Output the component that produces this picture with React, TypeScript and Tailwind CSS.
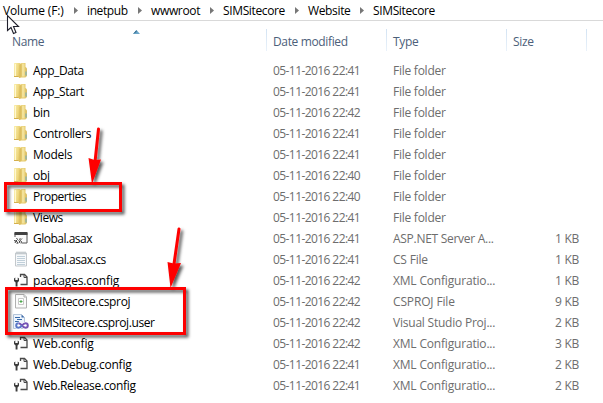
import type { ReactNode } from "react";

type Kind = "folder" | "asax" | "cs" | "config" | "csproj" | "user";
type Row = { name: string; kind: Kind; date: string; type: string; size?: string; nt: string; tt: string };

const FOLDER = { kind: "folder" as Kind, type: "File folder", tt: "tracking-[-0.25px]" };
const XML = { kind: "config" as Kind, type: "XML Configuratio...", tt: "tracking-[-0.18px]" };

const rows: Row[] = [
  { ...FOLDER, name: "App_Data", date: "22:41", nt: "tracking-[-0.4px]" },
  { ...FOLDER, name: "App_Start", date: "22:41", nt: "tracking-[-0.36px]" },
  { ...FOLDER, name: "bin", date: "22:42", nt: "tracking-[-0.3px]" },
  { ...FOLDER, name: "Controllers", date: "22:41", nt: "tracking-[-0.36px]" },
  { ...FOLDER, name: "Models", date: "22:41", nt: "tracking-[-0.28px]" },
  { ...FOLDER, name: "obj", date: "22:40", nt: "tracking-[-0.25px]" },
  { ...FOLDER, name: "Properties", date: "22:40", nt: "tracking-[-0.52px]" },
  { ...FOLDER, name: "Views", date: "22:41", nt: "tracking-[-0.4px]" },
  { name: "Global.asax", kind: "asax", date: "22:41", type: "ASP.NET Server A...", size: "1 KB", nt: "tracking-[-0.5px]", tt: "tracking-[-0.28px]" },
  { name: "Global.asax.cs", kind: "cs", date: "22:41", type: "CS File", size: "1 KB", nt: "tracking-[-0.45px]", tt: "tracking-[-0.2px]" },
  { ...XML, name: "packages.config", date: "22:42", size: "1 KB", nt: "tracking-[-0.18px]" },
  { name: "SIMSitecore.csproj", kind: "csproj", date: "22:42", type: "CSPROJ File", size: "9 KB", nt: "tracking-[-0.32px]", tt: "tracking-[-0.15px]" },
  { name: "SIMSitecore.csproj.user", kind: "user", date: "22:42", type: "Visual Studio Proj...", size: "2 KB", nt: "tracking-[-0.41px]", tt: "tracking-[-0.22px]" },
  { ...XML, name: "Web.config", date: "22:42", size: "3 KB", nt: "tracking-[-0.16px]" },
  { ...XML, name: "Web.Debug.config", date: "22:41", size: "2 KB", nt: "tracking-[-0.22px]" },
  { ...XML, name: "Web.Release.config", date: "22:41", size: "2 KB", nt: "tracking-[-0.32px]" },
];

const crumbs = [
  { label: "Volume (F:)", box: "w-[84px] tracking-[-0.14px]" },
  { label: "inetpub", box: "w-[64px] tracking-[-0.4px]" },
  { label: "wwwroot", box: "w-[72px] tracking-[-0.35px]" },
  { label: "SIMSitecore", box: "w-[85px] tracking-[-0.36px]" },
  { label: "Website", box: "w-[65px] tracking-[-0.35px]" },
  { label: "SIMSitecore", box: "w-[64px] tracking-[-0.36px]" },
];

function Icon({ children }: { children: ReactNode }) {
  return (
    <svg viewBox="0 0 16 16" className="mb-px h-4 w-4 shrink-0">
      {children}
    </svg>
  );
}

function FileIcon({ kind }: { kind: Kind }) {
  switch (kind) {
    case "folder":
      return (
        <Icon>
          <defs>
            <linearGradient id="fold" x1="0" y1="0" x2="1" y2="0.3">
              <stop offset="0" stopColor="#fbf1b4" />
              <stop offset="0.6" stopColor="#efd880" />
              <stop offset="1" stopColor="#dcbc55" />
            </linearGradient>
          </defs>
          <path d="M8 1h4.500v4l1 1v8l-1 1.500H7z" fill="#e5ca6c" />
          <path d="M8 1.500h3.500v13H8z" fill="#f3e29a" />
          <path d="M12.500 5l1.500 1.500v7.500l-1.500 1z" fill="#dcc06a" />
          <path d="M12.500 9.500h1v4h-1z" fill="#68a9c4" />
          <path d="M1 1h5.500L8.500 2v12.500l-2 1.500-1-1H1z" fill="url(#fold)" />
          <path d="M6.500 3l2-1v12.500l-2 1.500z" fill="#dcbe61" />
          <path d="M2.500 2v12" stroke="#fff8d0" strokeWidth="1" />
          <path d="M1 14.500h4.500" stroke="#d4b04d" />
        </Icon>
      );
    case "asax":
      return (
        <Icon>
          <path d="M2 7V3h12v10H9" fill="#fafafa" stroke="#555" />
          <path d="M1.500 2h13v3h-13z" fill="#414141" />
          <path d="M3.500 8l1 1.500L3 11l1.500 1L4 14M1 10.500l2 .5-1 2M6 9.500l1.500-1M9 8.500l-2 2 1.500 1-.5 2M5.500 10.500L7 12l-1.500 1" stroke="#444" strokeWidth="1" fill="none" />
        </Icon>
      );
    case "cs":
      return (
        <Icon>
          <path d="M2.500 2h11v13h-11z" fill="#f7f9fb" stroke="#c3c8cc" />
          <path d="M4 .5v3M6 .5v3M8 .5v3M10 .5v3M12 .5v3" stroke="#a0a8ae" strokeWidth=".8" />
          <path d="M4 5.500h8M4 7.500h8M4 9.500h8M4 11.500h8M4 13.500h8" stroke="#b9c9d5" strokeWidth=".9" />
        </Icon>
      );
    case "config":
      return (
        <Icon>
          <path d="M7.500 5V2.500h4L14 5v7.500H7.500" fill="#fafafa" stroke="#484848" strokeWidth="1.300" />
          <path d="M11 2.500v3h3" fill="none" stroke="#484848" />
          <path d="M1 6.500L2.300 5.500v2.500h2.400V5.500L6 6.500v2.500L4.500 10.500V14.500H2.600v-4L1 9z" fill="#3c3c3c" />
        </Icon>
      );
    case "csproj":
      return (
        <Icon>
          <path d="M2.500 1.500h8.500l2.500 2.500v11h-11z" fill="#fbfbfb" stroke="#b0b0b0" />
          <path d="M11 1.500v2.500h2.500" fill="#eee" stroke="#b0b0b0" />
          <path d="M5.500 5.500h5v6h-5z" fill="#fff" stroke="#c8c8c8" />
          <path d="M8 7v3M6.500 8.500h3" stroke="#4ca64c" />
        </Icon>
      );
    case "user":
      return (
        <Icon>
          <path d="M.5.5h8l3 3v11H.5z" fill="#edf4fd" stroke="#b4c5da" />
          <path d="M8.500.5v3h3z" fill="#406daa" />
          <path d="M2 3.500h5M4 5.500h5M2 7.500h4" stroke="#386aa9" />
          <path d="M9 11.500C7.700 9.900 6.700 9.200 5.500 9.200a2.300 2.300 0 000 4.600c1.200 0 2.200-.7 3.500-2.300s2.300-2.300 3.500-2.300a2.300 2.300 0 010 4.600c-1.200 0-2.200-.7-3.500-2.300z" fill="#fff" stroke="#fff" strokeWidth="3" />
          <path d="M9 11.500c1.300-1.600 2.300-2.300 3.500-2.300a2.300 2.300 0 010 4.600c-1.200 0-2.200-.7-3.500-2.300C7.700 9.900 6.700 9.200 5.500 9.200" fill="none" stroke="#7554b5" strokeWidth="2" />
          <path d="M5.500 9.200a2.300 2.300 0 000 4.600c1.200 0 2.200-.7 3.500-2.300" fill="none" stroke="#5a78c8" strokeWidth="2" />
        </Icon>
      );
  }
}

function Divider() {
  return <div className="h-[22px] w-px shrink-0 bg-gradient-to-b from-[#d3e3f3] to-[#eaf2fa]" />;
}

function Annotations() {
  return (
    <svg viewBox="0 0 603 403" className="pointer-events-none absolute left-0 top-0 h-[403px] w-[603px]">
      <defs>
        <filter id="shade" x="-20%" y="-20%" width="150%" height="150%">
          <feDropShadow dx="2.500" dy="2.500" stdDeviation="1.800" floodColor="#000" floodOpacity=".65" />
        </filter>
      </defs>
      <g filter="url(#shade)" fill="none" stroke="#fe0000" strokeWidth="3">
        <path d="M5.500 183.500h115v27h-115z" />
        <path d="M6.500 288.500h178v45h-178z" />
        <path d="M98.500 129L95 162M179 229l-5 35" strokeLinecap="round" />
        <path d="M88.500 158l6 2 6.500-.5L92 184z M167.500 262l6 1.500 7.500-.5-10.500 25z" fill="#fe0000" stroke="none" />
      </g>
      <path d="M7.500 15.500v15l3.500-3 2.500 6 2.500-1-2.500-6h5z" fill="#fff" stroke="#20202c" strokeWidth="1.100" />
    </svg>
  );
}

export default function App() {
  return (
    <div className="relative h-[403px] w-[603px] overflow-hidden whitespace-nowrap bg-white font-['Open_Sans','Noto_Sans',sans-serif] text-xs leading-[21px] text-black">
      <div className="flex h-[21px] items-center border-b border-[#d9d9d9] pl-[3px]">
        {crumbs.map((c, i) => (
          <div key={i} className={`flex h-[21px] shrink-0 items-center justify-between ${c.box}`}>
            <span>{c.label}</span>
            {i < crumbs.length - 1 && (
              <svg viewBox="0 0 4 7" className="mr-[9px] h-[7px] w-1">
                <path d="M0 0l4 3.500L0 7z" fill="#777" />
              </svg>
            )}
          </div>
        ))}
      </div>
      <div className="flex h-[39px] items-start pl-3 pt-2 tracking-[-0.36px] text-[#4c607a]">
        <span className="w-[121px] pt-0.5">Name</span>
        <svg viewBox="0 0 7 4" className="mt-[1px] h-1 w-[7px]">
          <path d="M0 4l3.500-4L7 4z" fill="#6ba6c9" />
          <path d="M0 4l3.500-4v2z" fill="#2f6688" />
        </svg>
        <div className="flex w-[127px] justify-end"><Divider /></div>
        <span className="w-[119px] pl-[6px] pt-0.5">Date modified</span>
        <Divider />
        <span className="w-[119px] pl-[6px] pt-0.5">Type</span>
        <Divider />
        <span className="w-[79px] pl-[6px] pt-0.5">Size</span>
        <Divider />
      </div>
      <div className="flex flex-col">
        {rows.map((r) => (
          <div key={r.name} className="flex h-[21px] items-center pl-[13px] text-[#6d6d6d]">
            <FileIcon kind={r.kind} />
            <span className={`w-[240px] pl-1 text-black ${r.nt}`}>{r.name}</span>
            <span className="w-[120px] pl-1 tracking-[-0.58px]">05-11-2016 {r.date}</span>
            <span className={`w-[120px] pl-1 ${r.tt}`}>{r.type}</span>
            <span className="w-[70px] text-right tracking-[-0.3px]">{r.size}</span>
          </div>
        ))}
      </div>
      <Annotations />
    </div>
  );
}
